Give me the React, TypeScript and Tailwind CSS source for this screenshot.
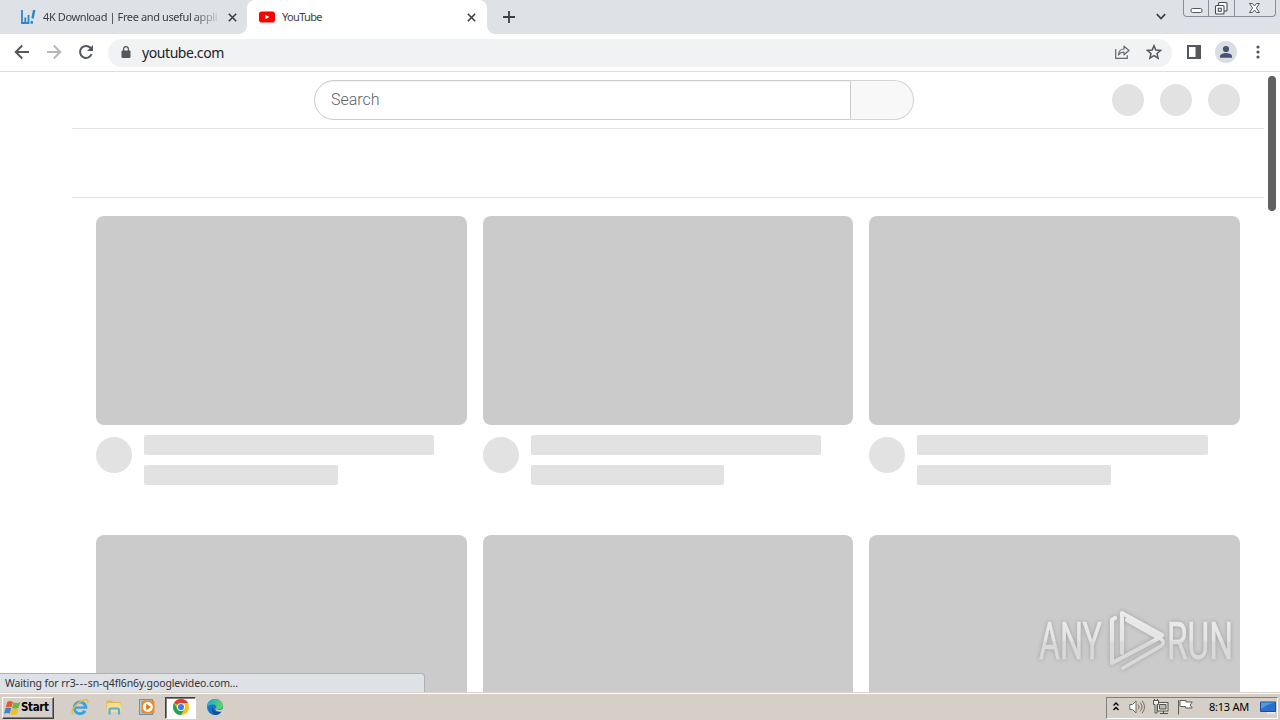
import React from "react";

const UI_FONT = "font-['Noto_Sans',sans-serif]";

const videos = [1, 2, 3, 4, 5, 6];

function CloseIcon() {
	return (
		<svg className="w-[9px] h-[9px] shrink-0" viewBox="0 0 9 9" fill="none" stroke="#3c4043" strokeWidth="1.6">
			<path d="M.8.8l7.4 7.4M8.2.8L.8 8.2" />
		</svg>
	);
}

function TabStrip() {
	return (
		<div className="relative flex h-[34px] bg-[#dee1e6] text-[10.5px] text-[#3c4043]">
			<div className="flex w-[247px] items-center pl-5 pr-[10px]">
				<svg className="w-4 h-4 shrink-0" viewBox="0 0 16 16" fill="none" stroke="#2f86c6" strokeWidth="1.8">
					<path d="M2 1v13M5.3 8.5v5M8.500 6v8M1.100 14h8.300" />
					<path d="M14.200 1l-1.700 8.500M12 12l-.5 2.800" strokeWidth="2.4" />
				</svg>
				<span className="ml-[7px] w-[176px] overflow-hidden whitespace-nowrap text-[11px] tracking-[-0.39px] [mask-image:linear-gradient(to_right,black_150px,transparent_179px)]">
					4K Download | Free and useful appli
				</span>
				<span className="ml-auto"><CloseIcon /></span>
			</div>
			<div className="relative flex w-60 items-center rounded-t-lg bg-white pl-3 pr-[11px]">
				<svg className="w-4 h-4 shrink-0" viewBox="0 0 16 16">
					<rect y="2.5" width="16" height="11" rx="2.8" fill="#f00" />
					<path d="M6.4 5.7v4.6l4-2.3z" fill="#fff" />
				</svg>
				<span className="ml-[7px] mt-px text-[11px] tracking-[-0.65px]">YouTube</span>
				<span className="ml-auto"><CloseIcon /></span>
				{/* curved tab feet */}
				<span className="absolute -left-2 bottom-0 w-2 h-2 bg-[radial-gradient(circle_at_0_0,#dee1e6_7.5px,white_8px)]" />
				<span className="absolute -right-2 bottom-0 w-2 h-2 bg-[radial-gradient(circle_at_100%_0,#dee1e6_7.5px,white_8px)]" />
			</div>
			<svg className="mt-[11px] ml-4 w-3 h-3" viewBox="0 0 12 12" stroke="#3c4043" strokeWidth="1.8">
				<path d="M6 0v12M0 6h12" />
			</svg>
			<svg className="mt-[13px] ml-auto w-[10px] h-2" viewBox="0 0 10 8" fill="none" stroke="#3c4043" strokeWidth="1.7">
				<path d="M.8 1.2L5 5.6l4.2-4.4" />
			</svg>
			<div className="ml-[17px] mr-[4px] flex h-[17px] w-[93px] rounded-b-[4px] border border-t-0 border-[#8b8e96] bg-[#e0e3e8]">
				<div className="flex w-[25px] justify-center border-r border-[#8b8e96]">
					<svg className="w-[13px] h-4" viewBox="0 0 13 16" fill="#fff" stroke="#54575d">
						<rect x="1" y="8.5" width="11" height="4" rx="1.5" />
					</svg>
				</div>
				<div className="flex w-[26px] justify-center border-r border-[#8b8e96] pr-[2px]">
					<svg className="w-[14px] h-4 shrink-0" viewBox="0 0 14 16" fill="#fff" stroke="#484b51" strokeWidth="1.100">
						<rect x="4.5" y="2.5" width="8.500" height="8.500" rx="1" />
						<rect x="1.5" y="5.5" width="8.500" height="8.500" rx="1" />
						<rect x="4.250" y="8.250" width="3" height="3" />
					</svg>
				</div>
				<div className="flex flex-1 justify-center pr-0.5">
					<svg className="w-[13px] h-4" viewBox="0 0 13 16" fill="#fff" stroke="#54575d">
						<path d="M1.5 3.5h3l2 2.5 2-2.5h3L8.4 8l3.1 4.5h-3l-2-2.5-2 2.5h-3L4.6 8z" />
					</svg>
				</div>
			</div>
		</div>
	);
}

function Toolbar() {
	return (
		<div className="flex h-[38px] items-center border-b border-[#dadce0] bg-white">
			<svg className="-mt-px ml-[14px] w-4 h-4" viewBox="0 0 16 16" fill="none" stroke="#54575b" strokeWidth="1.9">
				<path d="M15 8H2M8.2 1.5L1.7 8l6.5 6.5" />
			</svg>
			<svg className="-mt-px ml-4 w-4 h-4" viewBox="0 0 16 16" fill="none" stroke="#b5b7ba" strokeWidth="1.9">
				<path d="M1 8h13M7.8 1.5L14.3 8l-6.5 6.5" />
			</svg>
			<svg className="-mt-px ml-4 w-4 h-4" viewBox="0 0 16 16" fill="none" stroke="#54575b" strokeWidth="2">
				<path d="M13.6 10.2A6 6 0 1 1 12.4 3.8L14 5.4" />
				<path d="M15 1v6H9z" fill="#54575b" stroke="none" />
			</svg>
			<div className="ml-[14px] flex h-7 w-[1064px] items-center rounded-full bg-[#f0f2f4] pl-[13px] pr-[10px]">
				<svg className="-mt-0.5 w-[10px] h-3" viewBox="0 0 10 12">
					<rect y="4.5" x=".5" width="9" height="7.5" rx="1" fill="#54575b" />
					<path d="M2.6 5V3a2.4 2.4 0 0 1 4.8 0v2" fill="none" stroke="#54575b" strokeWidth="1.3" />
				</svg>
				<span className="ml-[11px] text-[14px] tracking-[-0.42px] text-[#202124]">youtube.com</span>
				<svg className="-mt-px ml-auto w-4 h-4" viewBox="0 0 16 16" fill="none" stroke="#66696d" strokeWidth="1.2">
					<path d="M1.7 5v9.3h11.6v-3" />
					<path d="M4.5 11C4.8 7 6.5 5 10 5V2.2l5 4.3-5 4.3V8C7.5 8 5.8 9 4.5 11z" strokeLinejoin="round" />
				</svg>
				<svg className="-mt-px ml-4 w-4 h-4" viewBox="0 0 16 16" fill="none" stroke="#54575b" strokeWidth="1.5">
					<path d="M8 1.8l1.8 4.3 4.7.4-3.5 3 1.1 4.6L8 11.7l-4.1 2.4L5 9.5l-3.5-3 4.7-.4z" />
				</svg>
			</div>
			<svg className="-mt-px ml-[15px] w-[14px] h-[14px]" viewBox="0 0 14 14">
				<path d="M1 1h12v12H1z" fill="#fff" stroke="#54575b" strokeWidth="2" />
				<path d="M8.5 0H14v14H8.5z" fill="#54575b" />
			</svg>
			<svg className="-mt-px ml-[14px] w-[22px] h-[22px]" viewBox="0 0 22 22">
				<circle cx="11" cy="11" r="11" fill="#dadde2" />
				<circle cx="11" cy="8" r="3.1" fill="#475475" />
				<path d="M5 16.8v-1.6c0-2.2 3.8-3.2 6-3.2s6 1 6 3.2v1.6z" fill="#475475" />
			</svg>
			<svg className="-mt-px ml-[19px] w-1 h-[14px]" viewBox="0 0 4 14" fill="#54575b">
				<circle cx="2" cy="2" r="1.6" />
				<circle cx="2" cy="7" r="1.6" />
				<circle cx="2" cy="12" r="1.6" />
			</svg>
		</div>
	);
}

function Watermark() {
	return (
		<svg className="absolute left-[1032px] top-[528px] w-[208px] h-[84px] overflow-visible drop-shadow-[0_0_2px_rgba(0,0,0,0.22)]" viewBox="0 0 208 84">
			<defs>
				<linearGradient id="wm" x1="0" y1="10" x2="0" y2="72" gradientUnits="userSpaceOnUse">
					<stop offset="0" stopColor="#ececec" />
					<stop offset=".48" stopColor="#e5e5e5" />
					<stop offset=".52" stopColor="#dadada" />
					<stop offset="1" stopColor="#d9d9d9" />
				</linearGradient>
			</defs>
			<g fill="url(#wm)" stroke="url(#wm)" strokeWidth=".5" fontFamily="Roboto, sans-serif" fontSize="52">
				<text x="7" y="59" textLength="63" lengthAdjust="spacingAndGlyphs">ANY</text>
				<text x="135" y="59" textLength="66" lengthAdjust="spacingAndGlyphs">RUN</text>
			</g>
			<g fill="none" stroke="url(#wm)" strokeWidth="4.200" strokeLinejoin="round" strokeLinecap="round">
				<path d="M90 53V13l40 22-2 2" />
				<path d="M83 18l-3 2v43l47-25-32-18" />
				<path d="M91 68l38-22c3-2 3-5 0-7L97 21" strokeWidth="3.600" />
			</g>
		</svg>
	);
}

function Page() {
	return (
		<div className="relative h-[620px] overflow-hidden bg-white">
			<div className="ml-[72px] mr-4 flex h-[57px] items-center border-b border-[#e2e2e2] pr-6">
				<div className="ml-[242px] flex h-10 w-[600px]">
					<div className="flex flex-1 items-center rounded-l-full border border-[#ccc] pl-4 font-['Roboto',sans-serif] text-base font-light text-[#606060] shadow-[inset_0_1px_1px_#f2f2f2]">
						<span className="-mt-px">Search</span>
					</div>
					<div className="w-[63px] rounded-r-full border border-l-0 border-[#d3d3d3] bg-[#f8f8f8]" />
				</div>
				<div className="ml-auto flex gap-4">
					<div className="w-8 h-8 rounded-full bg-[#e2e2e2]" />
					<div className="w-8 h-8 rounded-full bg-[#e2e2e2]" />
					<div className="w-8 h-8 rounded-full bg-[#e2e2e2]" />
				</div>
			</div>
			<div className="ml-[72px] mr-4 h-[69px] border-b border-[#e2e2e2]" />
			<div className="mt-[18px] ml-24 mr-10 grid grid-cols-3 gap-x-4">
				{videos.map((id) => (
					<div key={id} className="h-[319px]">
						<div className="h-[209px] rounded-lg bg-[#cbcbcb]" />
						<div className="flex pt-[10px]">
							<div className="mt-0.5 mr-3 w-9 h-9 shrink-0 rounded-full bg-[#e2e2e2]" />
							<div className="flex flex-1 flex-col gap-[10px]">
								<div className="h-5 w-[90%] rounded-xs bg-[#e2e2e2]" />
								<div className="h-5 w-[60%] rounded-xs bg-[#e2e2e2]" />
							</div>
						</div>
					</div>
				))}
			</div>
			{/* scrollbar thumb */}
			<div className="absolute right-1 top-1 h-[135px] w-2 rounded-full bg-[#606060]" />
			<Watermark />
			<div className="absolute bottom-0 left-0 h-[19px] w-[425px] rounded-tr-[4px] border-t border-r border-[#adb0b8] bg-[#dee1e6] pl-[5px] text-[10.5px] leading-[18px] text-[#303337]">
				<span className="tracking-[-0.1px]">Waiting for rr3<span className="tracking-[0.7px]">---</span>sn-q4fl6n6y.googlevideo.com...</span>
			</div>
		</div>
	);
}

function Taskbar() {
	return (
		<div className="flex h-7 items-center border-t border-[#d6d2ca] bg-[#d5cfc8] shadow-[inset_0_1px_0_white]">
			<div className="ml-0.5 mt-0.5 flex h-[22px] w-[52px] items-center border border-t-white border-l-white border-r-[#404040] border-b-[#404040] shadow-[inset_-1px_-1px_0_#808080]">
				<svg className="ml-px w-[17px] h-4 shrink-0" viewBox="0 0 17 16">
					<path d="M3.3 2C5.5.5 7 .9 8.900 1.900L7.400 7.500C5.600 6.500 4 6.500 1.700 7.600z" fill="#e8582a" />
					<path d="M9.500 2.200c2 1 4 1 6.900-.2l-1.700 5.800c-2.300 1.100-4.500 1.100-6.700.1z" fill="#6fb63d" />
					<path d="M1.500 8.200c2.200-1.100 3.900-1.100 5.700 0l-1.500 5.600C4 12.700 2.300 12.800.1 13.900z" fill="#3c86c8" />
					<path d="M7.800 8.600c2.200 1 4.400.9 6.700-.2l-1.600 5.700c-2.300 1.200-4.600 1.200-6.600.1z" fill="#f4bd22" />
				</svg>
				<span className="font-['DejaVu_Sans_Condensed','DejaVu_Sans',sans-serif] text-[11.5px] font-bold tracking-[-0.35px] text-black">Start</span>
			</div>
			<svg className="ml-[17px] w-[18px] h-[18px]" viewBox="0 0 18 18" fill="none">
				<path d="M14.800 9.500A5.800 5.800 0 1 0 14 12.800" stroke="#3aa3df" strokeWidth="3" />
				<path d="M4 9.600h12.200" stroke="#3aa3df" strokeWidth="2.300" />
				<path d="M2 16C-1.500 12.500 8 1.800 15.500 1.800c1.800 0 1.800 1.600.9 3.200" stroke="#e9bd3d" strokeWidth="1.500" />
			</svg>
			<svg className="ml-4 w-[18px] h-[18px]" viewBox="0 0 18 18">
				<path d="M1.500 2.500h5.500l1 1.500h8v10H1.500z" fill="#dfb94f" />
				<path d="M2.500 5h13l1 9h-15z" fill="#f5df8d" />
				<path d="M4.500 16.500v-4.500c0-1 .5-1.500 1.500-1.500h6.500c1 0 1.500.5 1.500 1.500v4.500" fill="none" stroke="#57aede" strokeWidth="2.200" />
			</svg>
			<svg className="ml-[15px] w-[18px] h-[18px]" viewBox="0 0 18 18">
				<rect x="1.500" y="1.500" width="13" height="15" fill="#a8cbe6" stroke="#6492b8" />
				<rect x="3.500" y="2.500" width="13" height="13" rx="1.500" fill="#f08a1d" />
				<circle cx="9.800" cy="9" r="5" fill="#fff" />
				<path d="M8.200 5.800v6.400l4.800-3.200z" fill="#e8700c" />
			</svg>
			<div className="ml-[9px] mt-0.5 flex h-[22px] w-[31px] items-center justify-center border border-t-[#404040] border-l-[#404040] border-r-white border-b-white bg-white shadow-[inset_1px_1px_0_#808080]">
				<svg className="-mt-0.5 w-4 h-4" viewBox="0 0 16 16">
					<circle cx="8" cy="8" r="8" fill="#fbc116" />
					<path d="M8 8L1.070 4A8 8 0 0 1 14.930 4H8z" fill="#e33b2e" />
					<path d="M1.070 4A8 8 0 0 0 8 16l3.500-6L8 8 4.500 10z" fill="#23a455" />
					<circle cx="8" cy="8" r="4" fill="#fff" />
					<circle cx="8" cy="8" r="3.100" fill="#3c7de8" />
				</svg>
			</div>
			<svg className="ml-[10px] w-[18px] h-[18px]" viewBox="0 0 18 18">
				<defs>
					<linearGradient id="edge" x1="0" y1="0" x2="1" y2=".3">
						<stop offset="0" stopColor="#1ba5df" />
						<stop offset="1" stopColor="#5bd463" />
					</linearGradient>
				</defs>
				<circle cx="9" cy="9" r="8" fill="#1376cf" />
				<path d="M1 9C1 4 5 1 9 1c5 0 8 3.500 8 6.500 0 2.500-2 4-4.500 4-2 0-3-.7-2.500-1.500C11 8.500 9.500 6.500 6.800 6.500 4 6.500 1.500 8 1 9z" fill="url(#edge)" />
				<path d="M7 9c-.5 4 3.500 6 8.500 4.500-1.500 2.500-4 3.500-6 3.500C6 16.500 4.500 11.500 7 9z" fill="#124f97" />
				<path d="M9.800 9.600c-.4 1.200.8 2.400 3 2.400 1.700 0 3-.5 3.700-1.300l1.500.3-2 2.500c-4 .8-7.700-1-6.200-3.900z" fill="#d5cfc8" />
			</svg>
			<div className="ml-auto mr-0.5 mt-0.5 flex h-[22px] w-[172px] items-center border border-t-[#808080] border-l-[#808080] border-r-white border-b-white text-[11px] text-black">
				<svg className="-mt-0.5 ml-[6px] w-[6px] h-[9px]" viewBox="0 0 6 9" fill="none" stroke="#000" strokeWidth="1.400">
					<path d="M.5 3.500L3 1l2.500 2.500M.5 8L3 5.500 5.500 8" />
				</svg>
				<svg className="-mt-0.5 ml-[10px] w-4 h-4" viewBox="0 0 16 16" fill="none" stroke="#696761">
					<path d="M.8 5.500h2.700L7 2v12l-3.500-3.500H.8z" fill="#fff" />
					<path d="M9 5.500c1.300 1.500 1.300 3.500 0 5M11 3.500c2.500 2.700 2.500 6.300 0 9M13 1.800c3.200 3.700 3.200 8.700 0 12.400" />
				</svg>
				<svg className="-mt-0.5 ml-2 w-4 h-4" viewBox="0 0 16 16" fill="#f1f0ed" stroke="#55544f">
					<rect x="4.500" y="3.500" width="10.500" height="8.500" />
					<path d="M6.500 5.500h6.500v4.500H6.500z" fill="#bcbbb7" />
					<path d="M7 14.500h8M10.500 12v2" />
					<path d="M.5 1.500h5v4H4v8.500H2V5.500H.5zM1.500 1.500V0M4.500 1.500V0" />
				</svg>
				<svg className="-mt-0.5 ml-2 w-4 h-4" viewBox="0 0 16 16" fill="#fff" stroke="#5f5d58">
					<path d="M1.500 1v14.500M3 1.500h6V3h6.200l-2 3 2 3H8.500V7.500H3z" />
				</svg>
				<span className="-mt-px ml-[16px] whitespace-nowrap tracking-[-0.25px]">8:13 AM</span>
				<svg className="ml-auto mr-px w-4 h-[14px]" viewBox="0 0 16 14">
					<path d="M.5 1h15v9.500H.5z" fill="#2870ca" stroke="#1e4d91" />
					<path d="M1 1.500h14C9 3 5 5 1 8z" fill="#5796de" />
					<path d="M7 11h8v2H7z" fill="#e6eaf0" />
				</svg>
			</div>
		</div>
	);
}

export default function App() {
	return (
		<div className={`h-[720px] w-[1280px] overflow-hidden bg-white ${UI_FONT}`}>
			<TabStrip />
			<Toolbar />
			<Page />
			<Taskbar />
		</div>
	);
}
